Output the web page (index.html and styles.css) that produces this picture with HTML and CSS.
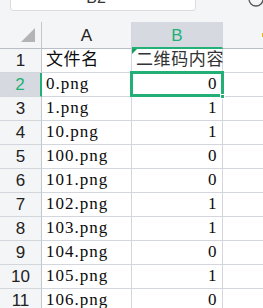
FILE: index.html
```html
<!DOCTYPE html>
<html lang="zh">
<head>
  <meta charset="utf-8">
  <title>二维码内容</title>
  <link rel="stylesheet" href="styles.css">
</head>
<body>
  <div class="topbar">
    <div class="namebox">B2</div>
    <svg class="search" width="16" height="10" viewBox="0 0 16 10"><circle cx="9" cy="-1" r="7" fill="none" stroke="#555" stroke-width="1.3"/></svg>
  </div>

  <div class="sheet">
    <div class="corner"><span class="tri"></span></div>
    <div class="colhead">A</div>
    <div class="colhead active">B</div>
    <div class="colhead last"><span class="mark"></span></div>

    <div class="rowhead">1</div>
    <div class="cell">文件名</div>
    <div class="cell note">二维码内容</div>
    <div class="cell last"></div>

    <div class="rowhead active">2</div>
    <div class="cell file">0.png</div>
    <div class="cell num selected">0</div>
    <div class="cell last"></div>

    <div class="rowhead">3</div>
    <div class="cell file">1.png</div>
    <div class="cell num">1</div>
    <div class="cell last"></div>

    <div class="rowhead">4</div>
    <div class="cell file">10.png</div>
    <div class="cell num">1</div>
    <div class="cell last"></div>

    <div class="rowhead">5</div>
    <div class="cell file">100.png</div>
    <div class="cell num">0</div>
    <div class="cell last"></div>

    <div class="rowhead">6</div>
    <div class="cell file">101.png</div>
    <div class="cell num">0</div>
    <div class="cell last"></div>

    <div class="rowhead">7</div>
    <div class="cell file">102.png</div>
    <div class="cell num">1</div>
    <div class="cell last"></div>

    <div class="rowhead">8</div>
    <div class="cell file">103.png</div>
    <div class="cell num">1</div>
    <div class="cell last"></div>

    <div class="rowhead">9</div>
    <div class="cell file">104.png</div>
    <div class="cell num">0</div>
    <div class="cell last"></div>

    <div class="rowhead">10</div>
    <div class="cell file">105.png</div>
    <div class="cell num">1</div>
    <div class="cell last"></div>

    <div class="rowhead">11</div>
    <div class="cell file">106.png</div>
    <div class="cell num">0</div>
    <div class="cell last"></div>
  </div>
</body>
</html>
```

FILE: styles.css
```css
html, body {
  margin: 0;
  height: 100%;
  overflow: hidden;
  background: #ffffff;
}

*, :after, :before {
  box-sizing: border-box;
}

.topbar {
  display: flex;
  align-items: flex-start;
  height: 22px;
  padding-left: 10px;
  background: #f4f5f7;
  overflow: hidden;
}

.namebox {
  width: 186px;
  height: 26px;
  margin-top: -15px;
  padding-right: 14px;
  border: 1px solid #dadce0;
  border-radius: 3px;
  background: #ffffff;
  color: #333333;
  font: 16px "Liberation Sans", sans-serif;
  line-height: 24px;
  text-align: center;
}

.search {
  margin-left: auto;
}

.sheet {
  display: grid;
  grid-template-columns: 42px 90px 91px 1fr;
  grid-template-rows: 27px;
  grid-auto-rows: 24px;
  font-family: "Liberation Serif", "Noto Sans CJK SC", serif;
  font-size: 17px;
  color: #0c0c0c;
}

.corner {
  display: flex;
  align-items: flex-end;
  justify-content: flex-end;
  padding: 0 6px 6px 0;
  background: #f4f5f7;
  border-right: 1px solid #c3c6cd;
  border-bottom: 1px solid #b9bdc5;
}

.tri {
  width: 14px;
  height: 14px;
  background: #b4b4b6;
  clip-path: polygon(100% 0, 100% 100%, 0 100%);
}

.colhead {
  display: flex;
  align-items: center;
  justify-content: center;
  padding-top: 2px;
  background: #f4f5f7;
  border-right: 1px solid #d3d6dc;
  border-bottom: 1px solid #b9bdc5;
  font: 17px "Liberation Sans", sans-serif;
  color: #222222;
}

.colhead.active {
  background: #d6d9df;
  color: #22b077;
  border-bottom: 2px solid #22b077;
}

.colhead.last {
  position: relative;
  border-right: 0;
}

.mark {
  position: absolute;
  right: 0;
  top: 11px;
  width: 1px;
  height: 4px;
  background: #f0b429;
}

.rowhead {
  display: flex;
  align-items: center;
  justify-content: center;
  padding-top: 1px;
  background: #f4f5f7;
  border-right: 1px solid #c3c6cd;
  border-bottom: 1px solid #d3d6dc;
  font: 17px "Liberation Sans", sans-serif;
  color: #222222;
}

.rowhead.active {
  background: #d6d9df;
  color: #22b077;
  border-right: 2px solid #22b077;
}

.cell {
  display: flex;
  align-items: flex-end;
  padding: 0 4px 2px 4px;
  white-space: nowrap;
  border-right: 1px solid #d3d6dc;
  border-bottom: 1px solid #d3d6dc;
  letter-spacing: 0.6px;
}

.cell.file {
  letter-spacing: 1px;
}

.cell.last {
  border-right: 0;
}

.cell.num {
  justify-content: flex-end;
  padding-right: 5px;
}

.cell.note {
  position: relative;
  color: #333333;
}

.cell.note:before {
  content: "";
  position: absolute;
  left: 0;
  top: 0;
  border-top: 5px solid #1a9b5f;
  border-right: 5px solid transparent;
}

.cell.selected {
  position: relative;
}

.cell.selected:after {
  content: "";
  position: absolute;
  left: -2px;
  top: -2px;
  right: -2px;
  bottom: -1px;
  border: 3px solid #22b077;
}

.cell.selected:before {
  content: "";
  position: absolute;
  right: -3px;
  bottom: -3px;
  width: 5px;
  height: 5px;
  background: #22b077;
  border: 1px solid #ffffff;
  z-index: 1;
}
```
